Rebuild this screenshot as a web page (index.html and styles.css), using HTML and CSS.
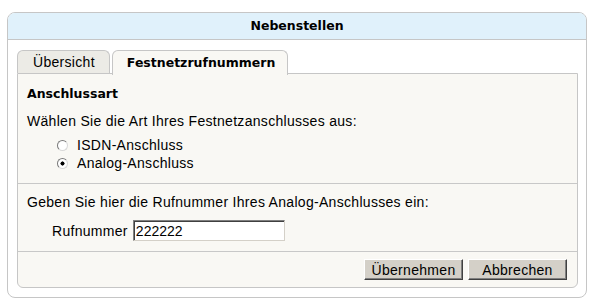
FILE: index.html
```html
<!DOCTYPE html>
<html lang="de">

<head>
    <meta charset="UTF-8">
    <title>Nebenstellen</title>
    <link rel="stylesheet" href="styles.css">
</head>

<body>
    <div class="box">
        <div class="box-head">Nebenstellen</div>
        <div class="box-body">
            <div class="tabs">
                <div class="tab">Übersicht</div>
                <div class="tab active">Festnetzrufnummern</div>
            </div>
            <div class="panel">
                <div class="section">
                    <h2>Anschlussart</h2>
                    <p>Wählen Sie die Art Ihres Festnetzanschlusses aus:</p>
                    <div class="radios">
                        <label><input type="radio" name="art"> ISDN-Anschluss</label>
                        <label><input type="radio" name="art" checked> Analog-Anschluss</label>
                    </div>
                </div>
                <div class="section">
                    <p>Geben Sie hier die Rufnummer Ihres Analog-Anschlusses ein:</p>
                    <div class="field">
                        <label for="nummer">Rufnummer</label>
                        <input type="text" id="nummer" value="222222">
                    </div>
                </div>
                <div class="section buttons">
                    <button>Übernehmen</button>
                    <button>Abbrechen</button>
                </div>
            </div>
        </div>
    </div>
</body>

</html>
```

FILE: styles.css
```css
body {
    margin: 0;
    font-family: "Liberation Sans", Arial, sans-serif;
    font-size: 14px;
    letter-spacing: 0.3px;
    color: #000;
    background: #fff;
}

.box {
    margin: 12px 0 0 7px;
    width: 578px;
    border: 1px solid #c6c6c6;
    border-radius: 8px;
}

.box-head {
    height: 26px;
    line-height: 26px;
    text-align: center;
    font-family: "DejaVu Sans", sans-serif;
    font-weight: bold;
    font-size: 12.5px;
    letter-spacing: 0;
    background: #e0f1fb;
    border-bottom: 1px solid #c6c6c6;
    border-radius: 7px 7px 0 0;
}

.box-body {
    padding: 10px 8px 9px 9px;
}

.tabs {
    display: flex;
    gap: 2px;
    height: 23px;
}

.tab {
    padding: 0 14px 0 15px;
    line-height: 22px;
    border: 1px solid #c6c6c6;
    border-bottom: none;
    border-radius: 6px 6px 0 0;
    background: #ecebe6;
}

.tab.active {
    position: relative;
    height: 24px;
    padding: 0 12px 0 14px;
    background: #f9f8f4;
    font-family: "DejaVu Sans", sans-serif;
    font-weight: bold;
    font-size: 12.5px;
    letter-spacing: 0;
    line-height: 24px;
    z-index: 1;
}

.panel {
    border: 1px solid #c6c6c6;
    border-radius: 0 0 6px 6px;
    background: #f9f8f4;
}

.section {
    padding: 12px 10px 11px 9px;
}

.section + .section {
    border-top: 1px solid #c8c8c8;
}

h2 {
    margin: 0;
    font-family: "DejaVu Sans", sans-serif;
    font-size: 12.5px;
    letter-spacing: 0;
    line-height: 16px;
}

p {
    margin: 11px 0 0;
    line-height: 16px;
}

.section + .section p {
    margin-top: 0;
}

.section:nth-child(2) {
    padding-top: 10px;
    padding-bottom: 10px;
}

.radios {
    display: flex;
    flex-direction: column;
    margin: 7px 0 0 30px;
}

.radios label {
    display: flex;
    align-items: center;
    height: 18px;
    gap: 9px;
}

.radios input {
    appearance: none;
    margin: 0;
    width: 11px;
    height: 11px;
    border-radius: 50%;
    border: 1px solid;
    border-color: #7a7a7a #d8d8d8 #d8d8d8 #7a7a7a;
    background: #fff;
}

.radios input:checked {
    background: radial-gradient(circle, #000 0 1.8px, #fff 2.3px);
}

.field {
    display: flex;
    align-items: center;
    gap: 5px;
    margin: 10px 0 0 25px;
}

.field input {
    width: 152px;
    height: 21px;
    box-sizing: border-box;
    margin: 0;
    padding: 0 2px;
    font: 14px "Liberation Sans", Arial, sans-serif;
    border: 1px solid;
    border-color: #7f7f7f #d4d0c8 #d4d0c8 #7f7f7f;
    box-shadow: inset 1px 1px 0 #404040;
    background: #fff;
}

.buttons {
    display: flex;
    justify-content: flex-end;
    gap: 5px;
    padding: 7px 10px 7px 9px;
}

.buttons button {
    width: 99px;
    height: 21px;
    padding: 0;
    font: 14px "Liberation Sans", Arial, sans-serif;
    letter-spacing: 0.3px;
    color: #000;
    background: #d4d0c8;
    border: 1px solid;
    border-color: #fff #404040 #404040 #fff;
    box-shadow: inset -1px -1px 0 #808080;
}
```
